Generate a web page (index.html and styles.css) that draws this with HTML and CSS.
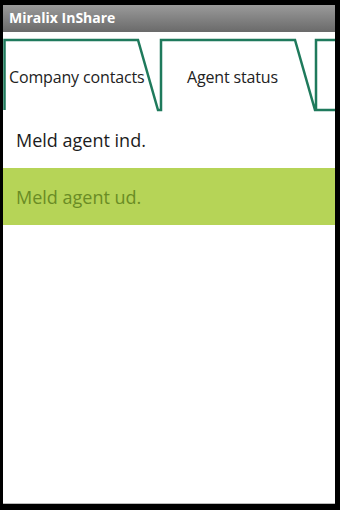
FILE: index.html
```html
<!DOCTYPE html>
<html>
<head>
<meta charset="utf-8">
<link rel="stylesheet" href="styles.css">
</head>
<body>
<div class="screen">
  <div class="titlebar">Miralix InShare</div>
  <div class="tabstrip">
    <svg class="tab-outline" width="332" height="80" viewBox="0 0 332 80">
      <path d="M1.5,78 L1.5,8 L135,8 L155,78 L158,78 L158,8 L292,8 L312,78 L332,78 M313,78 L313,8 L332,8" fill="none" stroke="#1f7a5c" stroke-width="2.5" stroke-linejoin="miter"/>
    </svg>
    <div class="tab tab-first">Company contacts</div>
    <div class="tab tab-active">Agent status</div>
  </div>
  <div class="list">
    <div class="row">Meld agent ind.</div>
    <div class="row row-selected">Meld agent ud.</div>
  </div>
</div>
</body>
</html>
```
FILE: styles.css
```css
html, body {
  margin: 0;
  padding: 0;
  background: #000;
  width: 340px;
  height: 510px;
  overflow: hidden;
}
.screen {
  margin: 5px 5px 0 3px;
  width: 332px;
  height: 498px;
  background: #fff;
  border-bottom: 1px solid #bbb;
  display: flex;
  flex-direction: column;
  font-family: "Open Sans", "Noto Sans", sans-serif;
}
.titlebar {
  height: 27px;
  box-sizing: border-box;
  padding: 4px 0 0 6px;
  background: linear-gradient(#9a9a9a, #6a6a6a);
  color: #fff;
  font-weight: bold;
  font-size: 14px;
  line-height: 18px;
}
.tabstrip {
  position: relative;
  height: 80px;
  display: flex;
  align-items: center;
}
.tab-outline {
  position: absolute;
  left: 0;
  top: 0;
}
.tab {
  position: relative;
  font-size: 16px;
  color: #222;
  padding-top: 10px;
  letter-spacing: -0.15px;
}
.tab-first {
  width: 155px;
  padding-left: 6px;
  box-sizing: border-box;
}
.tab-active {
  width: 157px;
  box-sizing: border-box;
  padding-right: 8px;
  text-align: center;
}
.list {
  display: flex;
  flex-direction: column;
}
.row {
  height: 56px;
  display: flex;
  align-items: center;
  padding-left: 13px;
  font-size: 18px;
  color: #1c1c1c;
}
.row-selected {
  height: 57px;
  background: #b6d457;
  color: #6a8c25;
}
```
